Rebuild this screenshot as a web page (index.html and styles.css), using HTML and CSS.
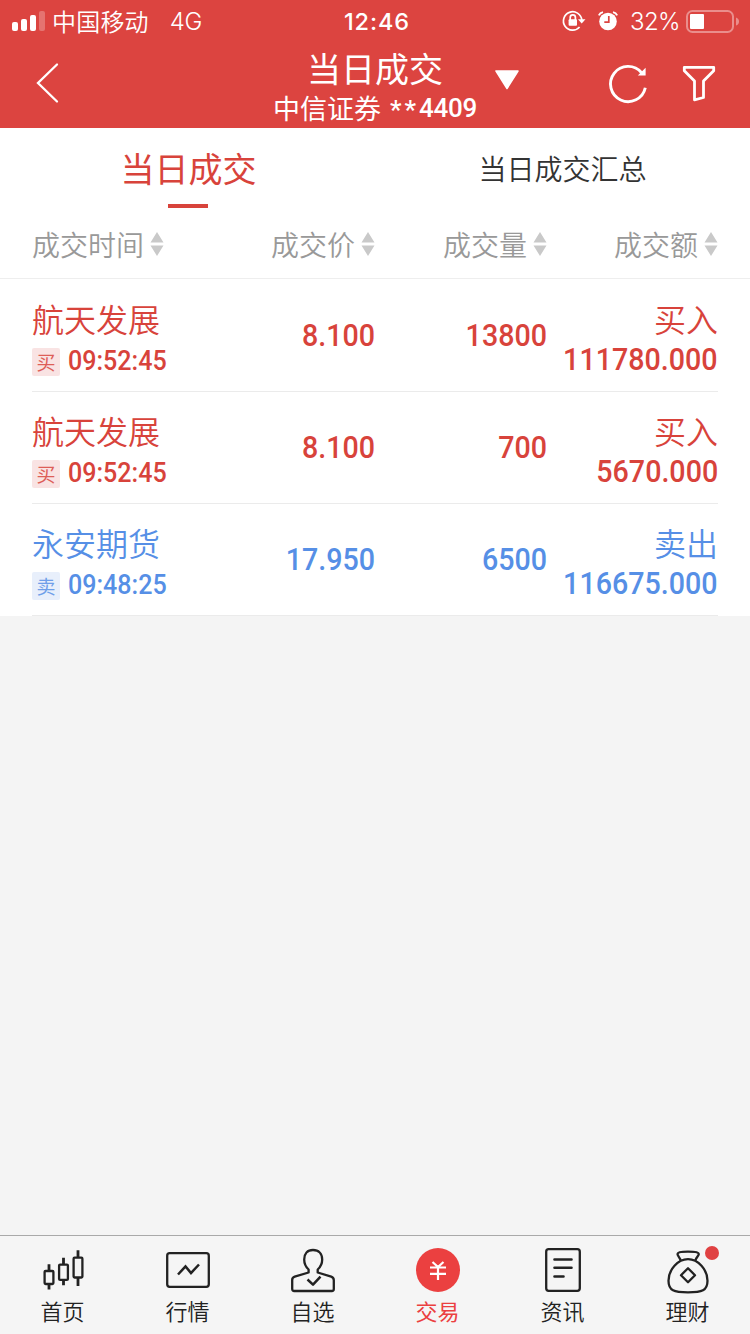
FILE: index.html
```html
<!DOCTYPE html>
<html lang="zh-CN">
<head>
<meta charset="utf-8">
<title>当日成交</title>
<link rel="stylesheet" href="styles.css">
</head>
<body>
<div class="app">
  <header class="header">
    <div class="status">
      <div class="status-left">
        <svg width="34" height="20" viewBox="0 0 34 20" fill="#fff"><rect x="0" y="11" width="6" height="9" rx="2"/><rect x="9" y="8" width="6" height="12" rx="2"/><rect x="18" y="4" width="6" height="16" rx="2"/><rect x="27" y="0" width="6" height="20" rx="2" opacity=".25"/></svg>
        <span class="carrier">中国移动</span>
        <span class="network">4G</span>
      </div>
      <span class="clock">12:46</span>
      <div class="status-right">
        <svg class="lock" width="24" height="22" viewBox="0 0 24 22" fill="none" stroke="#fff" stroke-width="1.7"><path d="M17.600 17A9.200 9.200 0 1 1 19.800 10"/><path d="M16 9.200h7.500L19.700 13.600z" fill="#fff" stroke="none"/><rect x="6.600" y="9.300" width="8.400" height="6.400" rx="1" fill="#fff" stroke="none"/><path d="M8.200 10V7.400a2.600 2.600 0 0 1 5.200 0V10"/></svg>
        <svg class="alarm" width="20" height="20" viewBox="0 0 20 20" fill="none"><circle cx="10" cy="10.500" r="8.800" fill="#fff"/><path d="M10.800 5v6.200H6.300" stroke="#dc4440" stroke-width="1.7"/><path d="M.8 4.300Q2 2 5 1.200M19.200 4.300Q18 2 15 1.200" stroke="#fff" stroke-width="1.8"/></svg>
        <span class="percent">32%</span>
        <svg class="battery" width="54" height="24" viewBox="0 0 54 24"><rect x="1" y="1" width="46" height="21" rx="5.500" fill="none" stroke="#fff" stroke-opacity=".4" stroke-width="2"/><rect x="4" y="4" width="14" height="15" rx="1" fill="#fff"/><path d="M50 7.500q3 1 3 4t-3 4z" fill="#fff" opacity=".4"/></svg>
      </div>
    </div>
    <div class="nav">
      <svg class="back" width="26" height="42" viewBox="0 0 26 42" fill="none" stroke="#fff" stroke-width="2.300" stroke-linecap="round"><path d="M22 2.500 3 21l19 18.500"/></svg>
      <div class="titles">
        <h1 class="title">当日成交</h1>
        <div class="account"><span>中信证券</span><span class="mask">**</span><span class="acct-no">4409</span></div>
      </div>
      <svg class="caret" width="26" height="22" viewBox="0 0 26 22"><path d="M2 2h22L13 19.500z" fill="#fff" stroke="#fff" stroke-width="1.500" stroke-linejoin="round"/></svg>
      <svg class="refresh" width="42" height="42" viewBox="0 0 42 42" fill="none" stroke="#fff" stroke-width="2.900"><path d="M37.300 25.700A17.600 17.600 0 1 1 33.600 10.700"/><path d="M37.600 5.700v7.800h-7.800z" fill="#fff" stroke="none"/></svg>
      <svg class="filter" width="36" height="40" viewBox="0 0 36 40" fill="none" stroke="#fff" stroke-width="2.800" stroke-linejoin="round"><path d="M3.300 3.300h29.400v3.400L22.500 17v16.500l-9 2.300V17L3.300 6.700z"/></svg>
    </div>
  </header>

  <main class="panel">
    <div class="tabs">
      <div class="tab tab-active"><span>当日成交</span></div>
      <div class="tab"><span>当日成交汇总</span></div>
    </div>
    <div class="columns grid">
      <div class="column first">成交时间<svg class="sort" width="14" height="26" viewBox="0 0 14 26"><path d="M7 1l6.500 10.500H.5zM.5 14.500h13L7 25z"/></svg></div>
      <div class="column">成交价<svg class="sort" width="14" height="26" viewBox="0 0 14 26"><path d="M7 1l6.500 10.500H.5zM.5 14.500h13L7 25z"/></svg></div>
      <div class="column">成交量<svg class="sort" width="14" height="26" viewBox="0 0 14 26"><path d="M7 1l6.500 10.500H.5zM.5 14.500h13L7 25z"/></svg></div>
      <div class="column">成交额<svg class="sort" width="14" height="26" viewBox="0 0 14 26"><path d="M7 1l6.500 10.500H.5zM.5 14.500h13L7 25z"/></svg></div>
    </div>
    <div class="rows">
      <div class="row grid buy">
        <div class="stock"><div class="name">航天发展</div><div class="when"><span class="tag">买</span><span class="time">09:52:45</span></div></div>
        <div class="num">8.100</div><div class="num">13800</div>
        <div class="total"><div class="name">买入</div><div class="num">111780.000</div></div>
      </div>
      <div class="row grid buy">
        <div class="stock"><div class="name">航天发展</div><div class="when"><span class="tag">买</span><span class="time">09:52:45</span></div></div>
        <div class="num">8.100</div><div class="num">700</div>
        <div class="total"><div class="name">买入</div><div class="num">5670.000</div></div>
      </div>
      <div class="row grid sell">
        <div class="stock"><div class="name">永安期货</div><div class="when"><span class="tag">卖</span><span class="time">09:48:25</span></div></div>
        <div class="num">17.950</div><div class="num">6500</div>
        <div class="total"><div class="name">卖出</div><div class="num">116675.000</div></div>
      </div>
    </div>
  </main>

  <nav class="tabbar">
    <div class="item">
      <svg width="46" height="46" viewBox="0 0 46 46" fill="none" stroke="#222" stroke-width="2.300"><rect x="4.600" y="24" width="8.800" height="13" rx="1"/><rect x="19.100" y="17.600" width="8.800" height="15.300" rx="1"/><rect x="33.600" y="10.700" width="8.800" height="19.800" rx="1"/><path d="M9 17.300V24M9 37v5.500M23.500 10.700v7M23.500 33v5.300M38 3.300v7M38 30.500V39" stroke-width="2.800"/></svg>
      <span>首页</span>
    </div>
    <div class="item">
      <svg width="46" height="46" viewBox="0 0 46 46" fill="none" stroke="#222" stroke-width="2.300"><rect x="2.200" y="6.200" width="41.600" height="33.600" rx="2.500"/><path d="M13 27.500l7.500-8 5.500 6.500 8-8.500" stroke-width="2.500"/></svg>
      <span>行情</span>
    </div>
    <div class="item">
      <svg width="46" height="46" viewBox="0 0 46 46" fill="none" stroke="#222" stroke-width="2.300" stroke-linejoin="round"><path d="M18.600 25.500V22.500C15.300 19.500 14.200 16.500 14.200 12.500 14.200 6.500 17.500 3 23 3s9.200 3.500 9.200 9.500c0 4-1.200 7-4.500 10v3l13.500 4.200q2.600.8 2.600 3.500V42q0 2-2 2H4.200q-2 0-2-2V33q0-2.500 2.500-3.300z"/><path d="M17.500 32.500l5.500 5.200 7.500-8" stroke-width="2.500"/></svg>
      <span>自选</span>
    </div>
    <div class="item current">
      <svg width="46" height="46" viewBox="0 0 46 46"><circle cx="23" cy="23" r="22" fill="#eb4040"/><path d="M17.500 15l5.500 5 5.500-5M15 20.500h16M15 26.800h16M23 20V33" fill="none" stroke="#fff" stroke-width="2.200"/></svg>
      <span>交易</span>
    </div>
    <div class="item">
      <svg width="46" height="46" viewBox="0 0 46 46" fill="none" stroke="#222" stroke-width="2.300" stroke-linecap="round"><rect x="6.200" y="2.200" width="33.600" height="41.600" rx="2.500"/><path d="M14.500 12.500h17M14.500 20.800h17M14.500 29.500h9" stroke-width="2.600"/></svg>
      <span>资讯</span>
    </div>
    <div class="item">
      <svg width="46" height="46" viewBox="0 0 46 46" fill="none" stroke="#222" stroke-width="2.300" stroke-linejoin="round"><path d="M15.800 13.800C15 10.500 12.500 9 12.500 7c0-1.800 5-2.300 10.500-2.300S33.800 5.200 33.800 7c0 2-2.800 3.500-3.600 6.800"/><path d="M23 12.200c10 0 19.500 10.300 19.500 21.500 0 9.800-5.500 11.600-19.500 11.600S3.500 43.500 3.500 33.700C3.500 22.500 13 12.200 23 12.200z"/><path d="M23 21.200l7 7-7 7-7-7z"/></svg>
      <i class="dot"></i>
      <span>理财</span>
    </div>
  </nav>
</div>
</body>
</html>
```

FILE: styles.css
```css
* { box-sizing: border-box; }
body {
  margin: 0;
  background: #f4f4f4;
  font-family: "Noto Sans CJK SC", sans-serif;
}
svg { display: block; flex: none; overflow: visible; }
.app { width: 750px; height: 1334px; display: flex; flex-direction: column; overflow: hidden; }

.header { height: 128px; background: #dc4440; color: #fff; flex: none; }
.status {
  height: 40px;
  display: grid;
  grid-template-columns: 1fr auto 1fr;
  align-items: center;
  padding: 0 10px 0 12px;
  line-height: 40px;
}
.status-left { display: flex; align-items: center; }
.status-left svg { margin-top: -1px; }
.carrier { margin: -2px 0 0 6px; font-size: 24px; font-weight: 350; letter-spacing: .2px; }
.network { margin-left: 21px; font: 350 24px/40px Inter, sans-serif; letter-spacing: -.5px; }
.clock { font: 500 23.5px/42px Inter, sans-serif; letter-spacing: .9px; padding: 1px 0 0 2px; }
.status-right { display: flex; align-items: center; justify-content: flex-end; }
.lock { margin-top: -1px; }
.alarm { margin: -2px 0 0 12px; }
.percent { margin-left: 12px; font: 350 24px/40px Inter, sans-serif; letter-spacing: -.6px; }
.battery { margin-left: 6px; }

.nav { height: 88px; display: flex; align-items: flex-start; padding: 0 33px 0 35px; }
.back { margin-top: 22px; }
.titles { flex: none; width: 240px; margin-left: 194px; text-align: center; }
.title { margin: 7px 0 0; font-size: 34px; line-height: 42px; font-weight: 400; }
.account { display: flex; justify-content: center; align-items: center; margin-top: 1px; font-size: 27px; line-height: 36px; font-weight: 400; }
.mask { margin-left: 9px; padding-top: 5px; font: 500 26px/31px Roboto, sans-serif; letter-spacing: 3px; }
.acct-no { font: 500 26px/36px Roboto, sans-serif; letter-spacing: -.3px; }
.caret { margin: 29px 0 0 -1px; }
.refresh { margin: 22px 0 0 88px; }
.filter { margin: 24px 0 0 auto; }

.panel { background: #fff; }
.tabs { height: 80px; display: flex; }
.tab { flex: 1; display: flex; flex-direction: column; align-items: center; color: #333; font-size: 28px; line-height: 80px; font-weight: 350; }
.tab-active { color: #d8433b; font-size: 34px; font-weight: 400; }
.tab-active span { height: 76px; padding-left: 2px; }
.tab-active::after { content: ""; width: 40px; height: 4px; background: #d8433b; }
.grid { display: grid; grid-template-columns: 171px 172px 172px 171px; }
.columns { height: 71px; padding: 2px 32px 0; border-bottom: 1px solid #eee; align-items: center; }
.column { display: flex; align-items: center; justify-content: flex-end; font-size: 28px; line-height: 40px; font-weight: 350; color: #999; }
.first { justify-content: flex-start; }
.sort { margin-left: 6px; fill: #c9c9c9; }
.rows { padding: 1px 32px 0; }
.row { height: 112px; border-bottom: 1px solid #ebebeb; }
.buy { color: #d8433b; --tag: #f8dfdf; }
.sell { color: #568fe6; --tag: #e4edfb; }
.name { font-size: 32px; line-height: 40px; font-weight: 350; }
.stock, .total { padding-top: 18px; }
.when { display: flex; align-items: center; height: 42px; margin-top: 1px; }
.tag { width: 28px; height: 28px; margin-top: 4px; border-radius: 2px; background: var(--tag); font-size: 19px; line-height: 27px; text-align: center; opacity: .85; }
.time {
  margin: 1px 0 0 8px;
  font: 500 28px/42px Roboto, sans-serif;
  transform: scaleX(.895);
  transform-origin: left;
}
.num {
  font: 500 32px/110px Roboto, sans-serif;
  text-align: right;
  white-space: nowrap;
  transform: scaleX(.895);
  transform-origin: right;
}
.total { display: flex; flex-direction: column; align-items: flex-end; }
.total .num { margin-top: 1px; line-height: 40px; }

.tabbar { height: 99px; margin-top: auto; flex: none; display: grid; grid-template-columns: repeat(6, 1fr); border-top: 1px solid #a9a9a9; background: #f5f5f5; }
.item { position: relative; display: flex; flex-direction: column; align-items: center; padding-top: 11px; font-size: 22px; line-height: 34px; font-weight: 350; color: #222; }
.current { color: #eb4040; font-weight: 400; }
.dot { position: absolute; left: 80px; top: 10px; width: 14px; height: 14px; border-radius: 50%; background: #e04142; }
```
